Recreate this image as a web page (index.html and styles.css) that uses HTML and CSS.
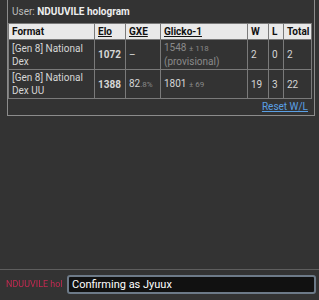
FILE: index.html
```html
<!DOCTYPE html>
<html lang="en">
<head>
  <meta charset="UTF-8">
  <meta name="viewport" content="width=device-width,initial-scale=1.0">
  <title>Ratings</title>
  <link rel="stylesheet" href="styles.css">
</head>
<body>
  <div class="chat-log">
    <div class="infobox">
      <div class="user-line">User: <strong>NDUUVILE hologram</strong></div>
      <table class="ratings">
        <colgroup>
          <col class="c-format">
          <col class="c-elo">
          <col class="c-gxe">
          <col class="c-glicko">
          <col class="c-w">
          <col class="c-l">
          <col class="c-total">
        </colgroup>
        <tr>
          <th>Format</th>
          <th><abbr>Elo</abbr></th>
          <th><abbr>GXE</abbr></th>
          <th><abbr>Glicko-1</abbr></th>
          <th>W</th>
          <th>L</th>
          <th>Total</th>
        </tr>
        <tr>
          <td>[Gen 8] National Dex</td>
          <td class="elo">1072</td>
          <td>&ndash;</td>
          <td class="muted">1548 <small>&plusmn; 118</small><br>(provisional)</td>
          <td>2</td>
          <td>0</td>
          <td>2</td>
        </tr>
        <tr>
          <td>[Gen 8] National Dex UU</td>
          <td class="elo">1388</td>
          <td>82<small>.8%</small></td>
          <td>1801 <small>&plusmn; 69</small></td>
          <td>19</td>
          <td>3</td>
          <td>22</td>
        </tr>
      </table>
      <div class="reset"><a href="#">Reset W/L</a></div>
    </div>
  </div>

  <div class="chat-bar">
    <span class="chat-name">NDUUVILE hol</span>
    <div class="chat-input">Confirming as Jyuux</div>
  </div>
</body>
</html>
```

FILE: styles.css
```css
:root {
  --bg: #333;
  --line: #7a7a7a;
  --text: #d6d6d6;
  --muted: #8a8a8a;
  --link: #5aa0e6;
}
*, *::before, *::after { box-sizing: border-box; }
body {
  margin: 0;
  height: 300px;
  display: flex;
  flex-direction: column;
  background: var(--bg);
  color: var(--text);
  font-family: Roboto, 'Liberation Sans', sans-serif;
  font-size: 10px;
  line-height: 13px;
  overflow: hidden;
}

.chat-log {
  flex: 1;
  padding: 0 4px 0 7px;
}

/* rating card, scrolled so its top edge is just out of view */
.infobox {
  margin-top: -1px;
  border: 1px solid #8c8c8c;
  padding: 0 2px 0 0;
}
.user-line {
  height: 23px;
  line-height: 23px;
  padding-left: 4px;
  color: #bbb;
}
.user-line strong { color: #eee; }

.ratings {
  width: 100%;
  table-layout: fixed;
  border-collapse: collapse;
}
.c-format { width: 86px; }
.c-elo { width: 31px; }
.c-gxe { width: 35px; }
.c-glicko { width: 87px; }
.c-w { width: 21px; }
.c-l { width: 15px; }
.ratings th,
.ratings td {
  border: 1px solid var(--line);
  padding: 1px 3px;
  text-align: left;
  vertical-align: middle;
}
.ratings th {
  background: #e9e9e9;
  color: #111;
  font-weight: bold;
}
.ratings abbr { text-decoration: underline; }
.ratings td { height: 29px; }
.ratings td.elo { font-weight: bold; }
.ratings small {
  font-size: 8px;
  color: var(--muted);
}
.ratings td.muted,
.ratings td.muted small { color: var(--muted); }

.reset {
  height: 16px;
  line-height: 16px;
  text-align: right;
  padding-right: 4px;
  font-size: 10px;
}
.reset a { color: var(--link); }

.chat-bar {
  height: 31px;
  border-top: 1px solid #5e5e5e;
  display: flex;
  align-items: center;
  gap: 3px;
  padding: 0 3px 2px 6px;
}
.chat-name {
  flex: 0 0 58px;
  color: #c42a50;
  font-size: 9px;
  white-space: nowrap;
  filter: blur(0.6px);
}
.chat-input {
  flex: 1;
  height: 19px;
  line-height: 15px;
  border: 2px solid #6d7a88;
  border-radius: 3px;
  background: #111;
  color: #fff;
  padding: 0 3px;
  font-size: 11px;
}
```
